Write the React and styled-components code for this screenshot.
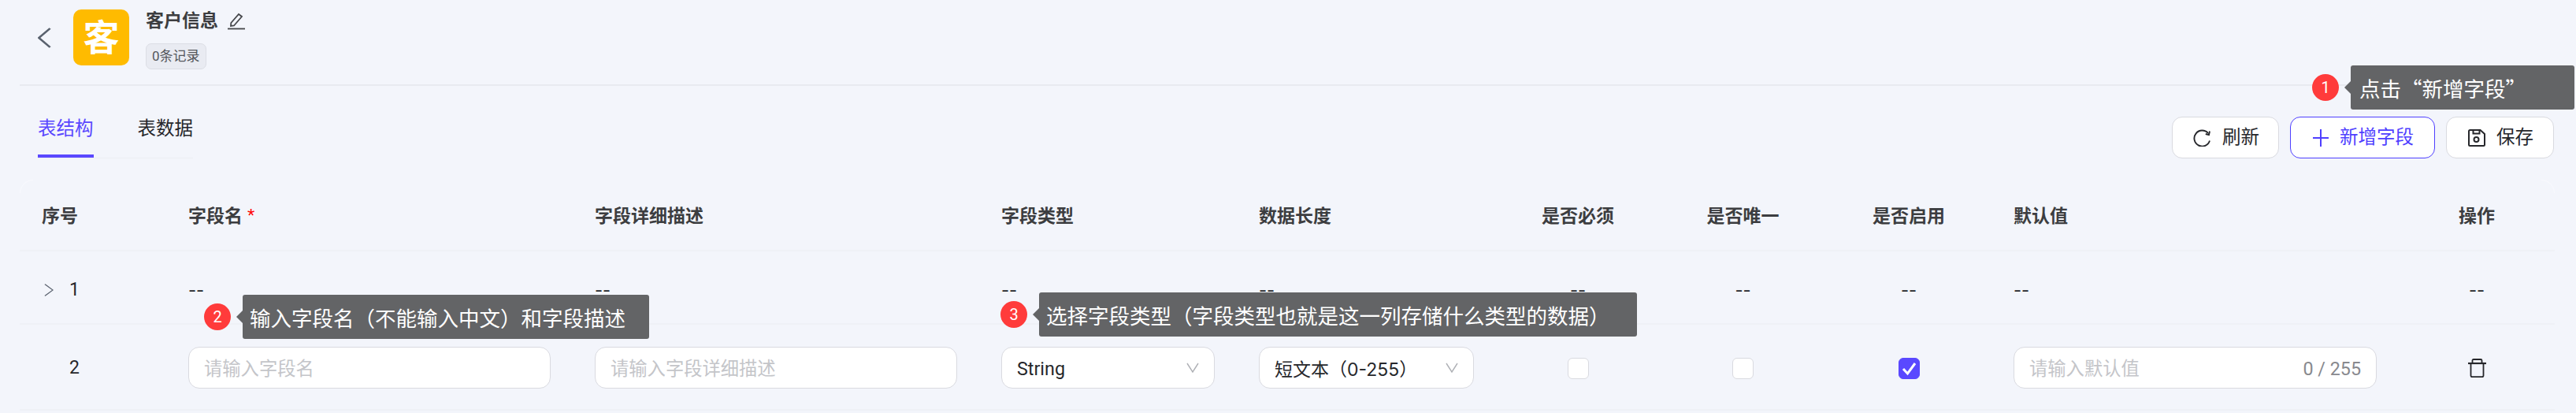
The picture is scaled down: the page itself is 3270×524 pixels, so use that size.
import React from "react";
import styled, { createGlobalStyle } from "styled-components";

const GlobalStyle = createGlobalStyle`
  html, body {
    margin: 0;
    padding: 0;
    background: #f3f5fb;
    overflow: hidden;
  }
  * {
    box-sizing: border-box;
  }
  body {
    font-family: "Roboto", "Noto Sans CJK SC", sans-serif;
    color: #26272b;
  }
`;

const Page = styled.div`
  position: relative;
  width: 3270px;
  height: 524px;
  padding: 0 27px 0 25px;
  background: #f3f5fb;
`;

const Header = styled.header`
  display: flex;
  height: 109px;
  padding: 12px 0 0 23px;
  border-bottom: 2px solid #e8eaf0;
`;

const BackButton = styled.div`
  display: flex;
  align-items: center;
  width: 45px;
  height: 71px;
  color: #59616e;
`;

const Avatar = styled.div`
  display: flex;
  align-items: center;
  justify-content: center;
  width: 71px;
  height: 71px;
  border-radius: 10px;
  background: #ffbb00;
  color: #fff;
  font-size: 46px;
  font-weight: 700;
  line-height: 1;
`;

const TitleBlock = styled.div`
  margin-left: 21px;
`;

const TitleRow = styled.div`
  display: flex;
  align-items: center;
  gap: 12px;
  height: 30px;
  font-size: 23px;
  font-weight: 700;
  line-height: 30px;
  color: #3c3d40;
`;

const RecordBadge = styled.div`
  display: inline-block;
  margin-top: 13px;
  padding: 0 7px;
  height: 33px;
  border: 1px solid #dcdee5;
  border-radius: 7px;
  background: #e9ebf2;
  font-size: 17px;
  line-height: 31px;
  color: #55575c;
`;

const Toolbar = styled.div`
  display: flex;
  align-items: flex-end;
  justify-content: space-between;
  height: 92px;
  padding: 0 1px 0 23px;
`;

const Tabs = styled.div`
  display: flex;
  gap: 56px;
  height: 91px;
  padding-top: 37px;
  border-bottom: 1px solid #eceef3;
`;

const Tab = styled.div`
  height: 53px;
  font-size: 23.5px;
  line-height: 33px;
  color: ${(props) => (props.$active ? "#5a48ff" : "#26272b")};
  border-bottom: ${(props) => (props.$active ? "4px solid #5a48ff" : "none")};
`;

const Actions = styled.div`
  display: flex;
  gap: 14px;
`;

const ActionButton = styled.button`
  display: flex;
  align-items: center;
  justify-content: center;
  gap: 14px;
  width: ${(props) => props.$width}px;
  height: 53px;
  padding: 0 0 0 2px;
  border: 1px solid ${(props) => (props.$primary ? "#4f3fff" : "#d9dae0")};
  border-radius: 13px;
  background: #fff;
  color: ${(props) => (props.$primary ? "#4f3fff" : "#26272b")};
  font: inherit;
  font-size: 23.5px;
  line-height: 1;
`;

const TableGrid = styled.div`
  display: grid;
  grid-template-columns: 186px 516px 516px 327px 329px 208px 211px 210px 517px 198px;
  align-items: center;
  height: ${(props) => props.$height}px;
  padding-top: ${(props) => props.$pad}px;
  border-bottom: 2px solid #eff1f6;
`;

const HeadCell = styled.div`
  padding: ${(props) => (props.$center ? "0" : "0 28px")};
  text-align: ${(props) => (props.$center ? "center" : "left")};
  font-size: 23px;
  font-weight: 700;
  line-height: 30px;
  color: #3c3d40;
`;

const Required = styled.span`
  margin-left: 6px;
  color: #f00;
  font-family: "Liberation Sans", sans-serif;
  font-size: 24px;
  font-weight: 400;
  line-height: 20px;
`;

const IndexCell = styled.div`
  display: flex;
  align-items: center;
  gap: 20px;
  padding-left: 31px;
  font-size: 23px;
  line-height: 30px;
`;

const ChevronSlot = styled.span`
  display: flex;
  width: 12px;
  color: #59616e;
`;

const TextCell = styled.div`
  padding: ${(props) => (props.$center ? "0" : "0 28px")};
  text-align: ${(props) => (props.$center ? "center" : "left")};
  font-family: "Inter", sans-serif;
  font-size: 22px;
  line-height: 30px;
`;

const FieldCell = styled.div`
  display: flex;
  justify-content: ${(props) => (props.$center ? "center" : "flex-start")};
  padding: ${(props) => (props.$center ? "0" : "0 28px")};
`;

const Input = styled.div`
  display: flex;
  align-items: center;
  justify-content: space-between;
  width: 100%;
  height: 53px;
  padding: 0 19px;
  border: 1px solid #d9dae0;
  border-radius: 14px;
  background: #fff;
  font-size: 23.3px;
  line-height: 1;
  color: #c4c5c9;
`;

const InputText = styled.span`
  padding-top: 5px;
`;

const RangeText = styled(InputText)`
  font-family: "Inter", "Noto Sans CJK SC", sans-serif;
  font-size: 23px;
`;

const Counter = styled.span`
  padding-top: 5px;
  color: #88898e;
`;

const SelectBox = styled(Input)`
  color: #26272b;
`;

const Checkbox = styled.div`
  display: flex;
  align-items: center;
  justify-content: center;
  width: 27px;
  height: 27px;
  margin-top: 2px;
  border: 1px solid ${(props) => (props.$checked ? "#5a48ff" : "#d9dae0")};
  border-radius: 6px;
  background: ${(props) => (props.$checked ? "#5a48ff" : "#fff")};
`;

const Corner = styled.div`
  position: absolute;
  top: 228px;
  left: ${(props) => props.$left}px;
  width: 17px;
  height: 17px;
  border-top: 1px solid #f8f9fd;
  border-${(props) => props.$side}: 1px solid #f8f9fd;
  border-top-${(props) => props.$side}-radius: 17px;
`;

const Callout = styled.div`
  position: absolute;
  top: ${(props) => props.$top}px;
  left: ${(props) => props.$left}px;
  display: flex;
  align-items: center;
`;

const Marker = styled.div`
  width: 34px;
  height: 34px;
  margin-right: 15px;
  border-radius: 50%;
  background: #ff3b3b;
  color: #fff;
  font-size: 20px;
  line-height: 34px;
  text-align: center;
`;

const Bubble = styled.div`
  position: relative;
  width: ${(props) => props.$width}px;
  height: 56px;
  padding-left: ${(props) => props.$inset}px;
  border-radius: 3px;
  background: #636466;
  color: #fff;
  font-family: "Noto Sans CJK SC", sans-serif;
  font-size: 26.5px;
  line-height: 58px;
  white-space: nowrap;

  &::before {
    content: "";
    position: absolute;
    top: 20px;
    left: -8px;
    border-top: 8px solid transparent;
    border-bottom: 8px solid transparent;
    border-right: 8px solid #636466;
  }
`;

const Chevron = ({ dir, width, height, weight = 1.6 }) => (
  <svg width={width} height={height} viewBox="0 0 12 24" fill="none" preserveAspectRatio="none">
    <path
      d={dir === "left" ? "M11 1 L1 12 L11 23" : "M1 1 L11 12 L1 23"}
      stroke="currentColor"
      strokeWidth={weight}
    />
  </svg>
);

const DownArrow = () => (
  <svg width="16" height="13" viewBox="0 0 16 13" fill="none">
    <path d="M1 1 L8 12 L15 1" stroke="#aeb0b5" strokeWidth="1.4" />
  </svg>
);

const PenIcon = () => (
  <svg width="22" height="22" viewBox="0 0 22 22" fill="none" stroke="#45464a" strokeWidth="1.8">
    <path d="M4 17 L4.3 13 L14 2 L18 5 L8 16.5 Z" />
    <path d="M0 20.5 H22" />
  </svg>
);

const RefreshIcon = () => (
  <svg width="23" height="22" viewBox="0 0 23 22" fill="none" stroke="#26272b" strokeWidth="1.9">
    <path d="M19 5 A10 10 0 1 0 21 14.5" />
    <path d="M21 2.5 L20 7 L15.8 6" />
  </svg>
);

const PlusIcon = () => (
  <svg width="20" height="24" viewBox="0 0 20 24" fill="none" stroke="#4f3fff" strokeWidth="2">
    <path d="M0 12 H20 M10 1 V23" />
  </svg>
);

const SaveIcon = () => (
  <svg width="22" height="22" viewBox="0 0 22 22" fill="none" stroke="#26272b" strokeWidth="2">
    <path d="M2.5 1 H15.5 L21 6 V19.5 Q21 21 19.5 21 H2.5 Q1 21 1 19.5 V2.5 Q1 1 2.5 1 Z" />
    <path d="M6.5 1 V5.5 H14.5 V1" />
    <circle cx="10.5" cy="13" r="3" />
  </svg>
);

const TrashIcon = () => (
  <svg width="23" height="24" viewBox="0 0 23 24" fill="none" stroke="#26272b" strokeWidth="1.8">
    <path d="M0 6 H23" strokeWidth="2.2" />
    <path d="M5.5 6 V2.5 Q5.5 1 7 1 H16 Q17.5 1 17.5 2.5 V6" />
    <path d="M3.5 6 V21.5 Q3.5 23.2 5.2 23.2 H17.8 Q19.5 23.2 19.5 21.5 V6" />
  </svg>
);

const CheckIcon = () => (
  <svg width="19" height="18" viewBox="0 0 19 18" fill="none" stroke="#fff" strokeWidth="3">
    <path d="M2 9 L7.5 15 L17 2" />
  </svg>
);

const HEAD_CELLS = [
  ["序号"],
  ["字段名", false, true],
  ["字段详细描述"],
  ["字段类型"],
  ["数据长度"],
  ["是否必须", true],
  ["是否唯一", true],
  ["是否启用", true],
  ["默认值"],
  ["操作", true],
];

export default function App() {
  return (
    <Page>
      <GlobalStyle />
      <Header>
        <BackButton>
          <Chevron dir="left" width={17} height={26} weight={2} />
        </BackButton>
        <Avatar>客</Avatar>
        <TitleBlock>
          <TitleRow>
            客户信息
            <PenIcon />
          </TitleRow>
          <RecordBadge>0条记录</RecordBadge>
        </TitleBlock>
      </Header>

      <Toolbar>
        <Tabs>
          <Tab $active>表结构</Tab>
          <Tab>表数据</Tab>
        </Tabs>
        <Actions>
          <ActionButton $width={136}>
            <RefreshIcon />
            刷新
          </ActionButton>
          <ActionButton $width={184} $primary>
            <PlusIcon />
            新增字段
          </ActionButton>
          <ActionButton $width={137}>
            <SaveIcon />
            保存
          </ActionButton>
        </Actions>
      </Toolbar>

      <TableGrid $height={118} $pad={32}>
        {HEAD_CELLS.map(([label, center, required]) => (
          <HeadCell key={label} $center={center}>
            {label}
            {required && <Required>*</Required>}
          </HeadCell>
        ))}
      </TableGrid>

      <TableGrid $height={93} $pad={6}>
        <IndexCell>
          <ChevronSlot>
            <Chevron dir="right" width={12} height={16} />
          </ChevronSlot>
          1
        </IndexCell>
        <TextCell>--</TextCell>
        <TextCell>--</TextCell>
        <TextCell>--</TextCell>
        <TextCell>--</TextCell>
        <TextCell $center>--</TextCell>
        <TextCell $center>--</TextCell>
        <TextCell $center>--</TextCell>
        <TextCell>--</TextCell>
        <TextCell $center>--</TextCell>
      </TableGrid>

      <TableGrid $height={109} $pad={2}>
        <IndexCell>
          <ChevronSlot />
          2
        </IndexCell>
        <FieldCell>
          <Input>
            <InputText>请输入字段名</InputText>
          </Input>
        </FieldCell>
        <FieldCell>
          <Input>
            <InputText>请输入字段详细描述</InputText>
          </Input>
        </FieldCell>
        <FieldCell>
          <SelectBox>
            <InputText>String</InputText>
            <DownArrow />
          </SelectBox>
        </FieldCell>
        <FieldCell>
          <SelectBox>
            <RangeText>短文本（0-255）</RangeText>
            <DownArrow />
          </SelectBox>
        </FieldCell>
        <FieldCell $center>
          <Checkbox />
        </FieldCell>
        <FieldCell $center>
          <Checkbox />
        </FieldCell>
        <FieldCell $center>
          <Checkbox $checked>
            <CheckIcon />
          </Checkbox>
        </FieldCell>
        <FieldCell>
          <Input>
            <InputText>请输入默认值</InputText>
            <Counter>0 / 255</Counter>
          </Input>
        </FieldCell>
        <FieldCell $center>
          <TrashIcon />
        </FieldCell>
      </TableGrid>

      <Corner $left={25} $side="left" />
      <Corner $left={3226} $side="right" />

      <Callout $top={83} $left={2935}>
        <Marker>1</Marker>
        <Bubble $width={284} $inset={11}>
          点击“新增字段”
        </Bubble>
      </Callout>
      <Callout $top={374} $left={259}>
        <Marker>2</Marker>
        <Bubble $width={516} $inset={9}>
          输入字段名（不能输入中文）和字段描述
        </Bubble>
      </Callout>
      <Callout $top={371} $left={1270}>
        <Marker>3</Marker>
        <Bubble $width={759} $inset={9}>
          选择字段类型（字段类型也就是这一列存储什么类型的数据）
        </Bubble>
      </Callout>
    </Page>
  );
}
